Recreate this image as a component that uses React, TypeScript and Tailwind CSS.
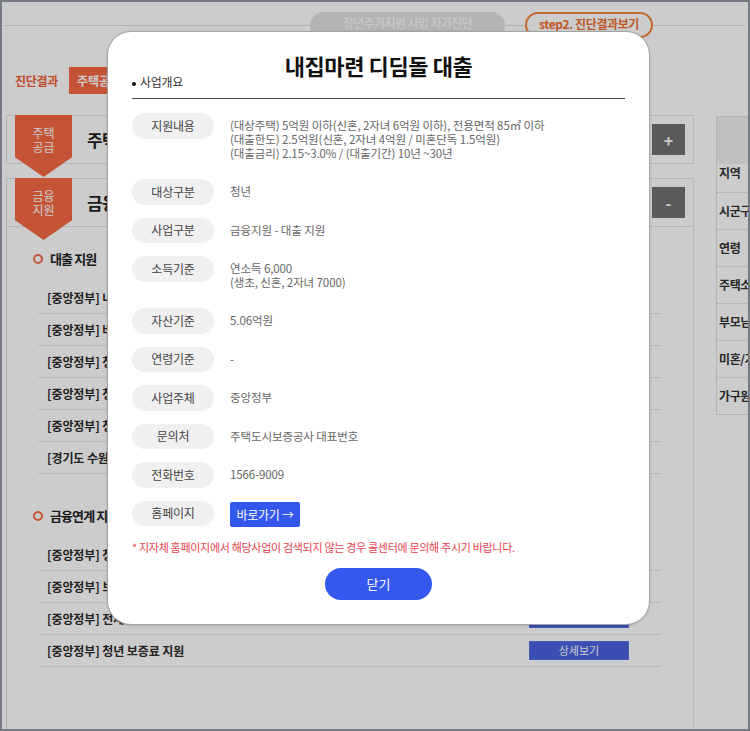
import React from "react";

const FONT = "font-['Noto_Sans_CJK_KR','Noto_Sans',sans-serif]";

interface InfoRow {
  label: string;
  lines?: string[];
  link?: boolean;
}

const infoRows: InfoRow[] = [
  {
    label: "지원내용",
    lines: [
      "(대상주택) 5억원 이하(신혼, 2자녀 6억원 이하), 전용면적 85㎡ 이하",
      "(대출한도) 2.5억원(신혼, 2자녀 4억원 / 미혼단독 1.5억원)",
      "(대출금리) 2.15~3.0% / (대출기간) 10년 ~30년",
    ],
  },
  { label: "대상구분", lines: ["청년"] },
  { label: "사업구분", lines: ["금융지원 - 대출 지원"] },
  { label: "소득기준", lines: ["연소득 6,000", "(생초, 신혼, 2자녀 7000)"] },
  { label: "자산기준", lines: ["5.06억원"] },
  { label: "연령기준", lines: ["-"] },
  { label: "사업주체", lines: ["중앙정부"] },
  { label: "문의처", lines: ["주택도시보증공사 대표번호"] },
  { label: "전화번호", lines: ["1566-9009"] },
  { label: "홈페이지", link: true },
];

const loanItems = [
  "[중앙정부] 내집마련 디딤돌 대출",
  "[중앙정부] 버팀목 전세자금대출",
  "[중앙정부] 청년전용 버팀목 전세자금",
  "[중앙정부] 청년전용 보증부월세대출",
  "[중앙정부] 청년 전세임대",
  "[경기도 수원시] 청년 전세자금 대출이자 지원",
];

const financeItems = [
  "[중앙정부] 청년 우대형 청약통장",
  "[중앙정부] 보금자리론",
  "[중앙정부] 전세보증금 반환보증",
  "[중앙정부] 청년 보증료 지원",
];

const sideRows = ["지역", "시군구", "연령", "주택소유", "부모님 주택소유", "미혼/기혼", "가구원수"];

function Badge({ top, bottom }: { top: string; bottom: string }) {
  return (
    <div className="absolute left-[8px] top-[-1px] w-[57px] h-[62px] bg-[#f76a45] [clip-path:polygon(0_0,100%_0,100%_68%,50%_100%,0_68%)] pt-[11px] text-center text-[12px] leading-[14px] text-white">
      <div>{top}</div>
      <div>{bottom}</div>
    </div>
  );
}

function ItemList({ items }: { items: string[] }) {
  return (
    <ul className="ml-[31px] mr-[32px]">
      {items.map((item) => (
        <li
          key={item}
          className="flex h-[32px] items-center justify-between border-b border-[#e8e8e8] pl-[9px]"
        >
          <span className="text-[12px] font-bold tracking-[-0.1px] text-[#2b2b2b]">{item}</span>
          <button className="mr-[32px] h-[19px] w-[100px] border border-[#5d74e6] bg-[#4a62e2] text-[11px] text-white">
            상세보기
          </button>
        </li>
      ))}
    </ul>
  );
}

function SectionHeading({ title, className }: { title: string; className: string }) {
  return (
    <div className={`flex items-center gap-[7px] pl-[26px] ${className}`}>
      <span className="h-[10px] w-[10px] rounded-full border-[2.5px] border-[#f76a45]" />
      <span className="text-[13px] font-bold leading-[18px] tracking-[-0.9px] text-[#222]">{title}</span>
    </div>
  );
}

export default function App() {
  return (
    <div className={`relative flex h-[731px] w-[750px] flex-col overflow-hidden border-2 border-[#767b83] bg-white ${FONT}`}>
      {/* top tabs */}
      <div className="pt-[10px]">
        <div className="mx-[3px] flex h-[14px] items-start border-b border-[#dcdcdc]">
          <div className="ml-[305px] flex h-[28px] w-[195px] justify-center rounded-[14px] bg-[#e1e1e1] pt-[2px] text-[12px] leading-[18px] tracking-[-0.6px] text-white">
            청년주거지원 사업 자가진단
          </div>
          <div className="ml-[20px] flex h-[26px] w-[128px] items-center justify-center rounded-[13px] border-2 border-[#f5823f] bg-white pb-[2px] text-[12px] font-bold tracking-[-0.4px] text-[#ef6f33]">
            step2. 진단결과보기
          </div>
        </div>
      </div>

      <div className="mt-[41px] flex items-center pl-[13px]">
        <span className="text-[12px] font-bold tracking-[-0.3px] text-[#f05c3a]">진단결과</span>
        <div className="ml-[11px] flex h-[27px] items-center bg-[#f76a45] px-[8px] text-[12px] font-bold text-white">
          주택공급 (2)
        </div>
        <div className="flex h-[27px] items-center bg-[#eeeeee] px-[8px] text-[12px] font-bold text-[#666]">
          금융지원 (10)
        </div>
      </div>

      <div className="mt-[21px] flex flex-1 pl-[4px]">
        <div className="flex w-[688px] shrink-0 flex-col">
          <div className="relative flex h-[49px] items-center justify-between border border-[#e4e4e4] bg-white">
            <Badge top="주택" bottom="공급" />
            <span className="pl-[80px] text-[17px] font-bold tracking-[-0.6px] text-[#222]">주택공급</span>
            <button className="mr-[8px] h-[31px] w-[33px] bg-[#717171] text-[16px] font-bold text-white">+</button>
          </div>

          <div className="mt-[14px] flex flex-1 flex-col border border-b-0 border-[#e4e4e4]">
            <div className="relative flex h-[48px] items-center justify-between border-b border-[#e4e4e4]">
              <Badge top="금융" bottom="지원" />
              <span className="pl-[80px] text-[17px] font-bold tracking-[-0.6px] text-[#222]">금융지원</span>
              <button className="mr-[8px] h-[31px] w-[33px] bg-[#717171] text-[16px] font-bold text-white">-</button>
            </div>
            <SectionHeading title="대출 지원" className="mt-[23px]" />
            <div className="mt-[14px]">
              <ItemList items={loanItems} />
            </div>
            <SectionHeading title="금융연계 지원" className="mt-[33px]" />
            <div className="mt-[14px]">
              <ItemList items={financeItems} />
            </div>
          </div>
        </div>

        <div className="ml-[22px] mt-[1px] w-[220px] shrink-0 self-start border border-[#e0e0e0]">
          <div className="h-[47px] bg-[#f1f1f1]" />
          {sideRows.map((row, i) => (
            <div
              key={row}
              className={`pl-[2px] text-[12px] font-bold leading-[18px] tracking-[-0.4px] text-[#333] ${
                i === 0 ? "pb-[10px]" : "border-t border-dotted border-[#cfcfcf] pt-[9px] pb-[9px]"
              } ${i === sideRows.length - 1 ? "pb-[0px]" : ""}`}
            >
              {row}
            </div>
          ))}
        </div>
      </div>

      {/* dim overlay */}
      <div className="absolute inset-0 bg-black/20" />

      {/* modal */}
      <div className="absolute left-[105px] top-[29px] w-[543px] rounded-[24px] border border-[#a3a3a3] bg-white px-[24px] pt-[19px] pb-[24px] shadow-sm">
        <h2 className="text-center text-[22px] font-bold leading-[28px] tracking-[-0.4px] text-[#111]">
          내집마련 디딤돌 대출
        </h2>
        <div className="-mt-[5px] flex items-center gap-[4px] border-b border-[#444] pb-[8px] text-[12px] leading-[16px] tracking-[-0.3px] text-[#333]">
          <span className="mt-[3px] h-[4px] w-[4px] rounded-full bg-[#111]" />
          사업개요
        </div>

        <div className="mt-[14px] flex flex-col gap-[13px]">
          {infoRows.map((row) => (
            <div key={row.label} className="flex items-start">
              <div className="flex h-[25.5px] w-[82px] shrink-0 items-center justify-center rounded-full bg-[#f0f0f0] text-[12px] tracking-[-0.2px] text-[#444]">
                {row.label}
              </div>
              <div className="ml-[16px]">
                {row.link ? (
                  <button className="h-[25px] w-[70px] rounded-[2px] bg-[#3457ee] text-[12px] tracking-[-0.3px] text-white">
                    바로가기 →
                  </button>
                ) : (
                  <div className="pt-[5px] pb-[6px] text-[11.5px] leading-[14px] tracking-[-0.1px] text-[#666]">
                    {row.lines?.map((line) => (
                      <div key={line}>{line}</div>
                    ))}
                  </div>
                )}
              </div>
            </div>
          ))}
        </div>

        <p className="mt-[13px] text-[11px] leading-[14px] tracking-[-0.3px] text-[#e8434f]">
          * 지자체 홈페이지에서 해당사업이 검색되지 않는 경우 콜센터에 문의해 주시기 바랍니다.
        </p>

        <div className="mt-[14px] flex justify-center">
          <button className="h-[32px] w-[107px] rounded-full bg-[#3457ee] text-[13px] text-white">닫기</button>
        </div>
      </div>
    </div>
  );
}
